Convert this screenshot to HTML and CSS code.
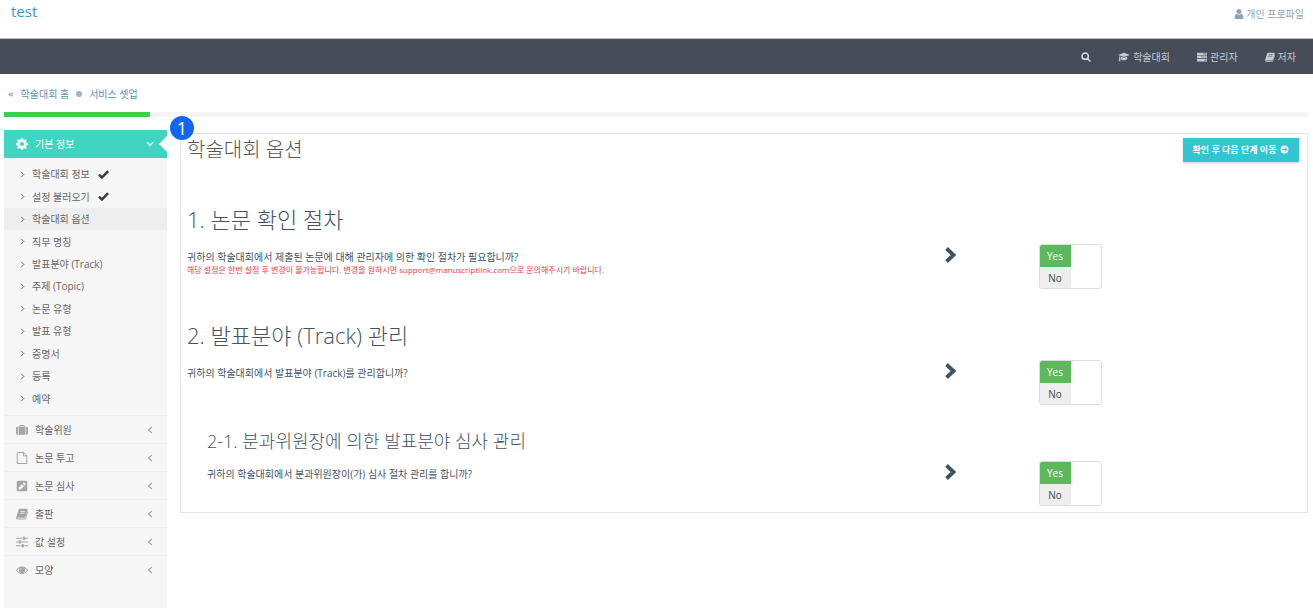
FILE: index.html
```html
<!DOCTYPE html>
<html lang="ko">
<head>
  <meta charset="UTF-8">
  <meta name="viewport" content="width=device-width, initial-scale=1.0">
  <title>학술대회 옵션</title>
  <link rel="stylesheet" href="styles.css">
</head>
<body>
  <!-- icons -->
  <svg width="0" height="0" class="sprite" aria-hidden="true">
    <symbol id="i-user" viewBox="0 0 16 16"><path d="M8 8a4 4 0 1 0 0-8 4 4 0 0 0 0 8zM4.400 7.500C2 8 1 10.500 1 13.500 1 15 2 16 3.500 16h9c1.500 0 2.500-1 2.500-2.500 0-3-1-5.500-3.400-6a5.200 5.200 0 0 1-7.200 0z"/></symbol>
    <symbol id="i-search" viewBox="0 0 16 16"><path fill="none" stroke="currentColor" stroke-width="2.400" stroke-linecap="round" d="M6.700 11.700a5 5 0 1 0 0-10 5 5 0 0 0 0 10zM10.400 10.400l4 4"/></symbol>
    <symbol id="i-cap" viewBox="0 0 20 16"><path d="M10 1L0 4.600l3 1.100c-.6.8-.8 2-.8 3.300a1 1 0 0 0-.2 1.700L1.300 15h3l-.7-4.300a1 1 0 0 0-.2-1.700c0-1.300.3-2.200.9-2.900L10 8.200l10-3.600zM4.900 7.500L4.600 11c0 1.500 2.500 2.600 5.400 2.600s5.400-1.100 5.400-2.600l-.3-3.500L10 9.400z"/></symbol>
    <symbol id="i-tasks" viewBox="0 0 16 16"><path fill-rule="evenodd" d="M0 1h16v4H0zM0 6h16v4H0zM0 11h16v4H0zM10 2.500v1h5v-1zM6 7.500v1h9v-1zM12 12.500v1h3v-1z"/></symbol>
    <symbol id="i-book" viewBox="0 0 16 16"><path fill-rule="evenodd" d="M5.400 1h8.800c1 0 1.500.7 1.200 1.600l-2.900 9.200c-.3.900-.9 1.200-1.800 1.200H2.600c-.8 0-1 .9 0 .9h8.700c.7 0 1-.3 1.200-.9l2.700-8.800c.6.300.9.800.7 1.500l-2.700 8.400c-.3.900-1 1.400-2 1.400H2.300C.8 15.500-.2 14 .3 12.500L3.300 2.600C3.700 1.500 4.400 1 5.400 1zM6.200 4l-.3 1h6l.3-1zM5.500 6.300l-.3 1h6l.3-1z"/></symbol>
    <symbol id="i-cog" viewBox="0 0 16 16"><path fill-rule="evenodd" d="M6.800 0h2.400l.4 2.100 1.300.6L12.700 1.500l1.800 1.800-1.200 1.800.6 1.300 2.100.4v2.400l-2.100.4-.6 1.300 1.200 1.800-1.800 1.800-1.800-1.200-1.300.6L9.200 16H6.800l-.4-2.100-1.300-.6-1.800 1.200-1.800-1.800 1.200-1.800-.6-1.300L0 9.200V6.800l2.100-.4.600-1.300-1.200-1.800 1.800-1.800 1.800 1.200 1.300-.6zM8 5.300a2.700 2.700 0 1 0 0 5.400 2.700 2.700 0 0 0 0-5.400z"/></symbol>
    <symbol id="i-down" viewBox="0 0 16 16"><path fill="none" stroke="currentColor" stroke-width="2" d="M3 5l5 5 5-5"/></symbol>
    <symbol id="i-left" viewBox="0 0 16 16"><path fill="none" stroke="currentColor" stroke-width="2" d="M11 3L6 8l5 5"/></symbol>
    <symbol id="i-right" viewBox="0 0 16 16"><path fill="none" stroke="currentColor" stroke-width="2.200" d="M5 2l6 6-6 6"/></symbol>
    <symbol id="i-chevron" viewBox="0 0 12 16"><path fill="none" stroke="currentColor" stroke-width="3.800" d="M1.500 1.500L8.500 8l-7 6.500"/></symbol>
    <symbol id="i-check" viewBox="0 0 16 16"><path fill="none" stroke="currentColor" stroke-width="3.600" d="M1.500 8.200l4.200 4.200 9-9.200"/></symbol>
    <symbol id="i-case" viewBox="0 0 18 16"><path fill-rule="evenodd" d="M5 3V1.500C5 .8 5.500.5 6 .5h6c.6 0 1 .4 1 1V3h1.200v12H3.800V3zM6.500 2v1h5V2zM2.800 3v12H2a2 2 0 0 1-2-2V5c0-1.100.9-2 2-2zM15.200 3v12h.8a2 2 0 0 0 2-2V5a2 2 0 0 0-2-2z"/></symbol>
    <symbol id="i-file" viewBox="0 0 16 16"><path fill="none" stroke="currentColor" stroke-width="1.300" stroke-linejoin="round" d="M1.700.7h8.600l4 4v10.600H1.700zM10 .7v4.500h4.300"/></symbol>
    <symbol id="i-pencil" viewBox="0 0 16 16"><path fill-rule="evenodd" d="M3 1h10a2 2 0 0 1 2 2v10a2 2 0 0 1-2 2H3a2 2 0 0 1-2-2V3c0-1.100.9-2 2-2zM3.700 12.500h2.600l4.300-4.300L8 5.600 3.700 9.900zM8.800 4.800l2.600 2.600 1.200-1.200c.4-.4.4-.7 0-1.100l-1.500-1.500c-.4-.4-.7-.4-1.100 0z"/></symbol>
    <symbol id="i-sliders" viewBox="0 0 16 16"><path d="M0 2.400h9v1.200H0zM13 2.400h3v1.200h-3zM9.500 1h3v4h-3zM0 7.400h3v1.200H0zM7 7.400h9v1.200H7zM3.500 6h3v4h-3zM0 12.400h7v1.200H0zM11 12.400h5v1.200h-5zM7.500 11h3v4h-3z"/></symbol>
    <symbol id="i-eye" viewBox="0 0 18 16"><path fill-rule="evenodd" d="M0 8.500C2 5 5.300 2.800 9 2.800s7 2.200 9 5.700c-2 3.400-5.300 5.500-9 5.500s-7-2.100-9-5.500zM1.600 8.500c1.700 2.600 4.400 4.300 7.400 4.300s5.700-1.700 7.400-4.300A9.300 9.300 0 0 0 12.600 5a4.600 4.600 0 1 1-7.200 0 9.300 9.300 0 0 0-3.800 3.500zM9 4.500c-1.400 0-2.700 1.200-2.700 2.700h1c0-1 .8-1.700 1.700-1.700z"/></symbol>
    <symbol id="i-go" viewBox="0 0 16 16"><path fill-rule="evenodd" d="M8 1a7 7 0 1 1 0 14A7 7 0 0 1 8 1zM7.600 3.800L9.900 7H3.700v2h6.200l-2.300 3.200h2.200L13 8 9.800 3.800z"/></symbol>
  </svg>

  <header class="top">
    <a class="logo" href="#">test</a>
    <a class="profile" href="#"><svg class="icon"><use href="#i-user"/></svg>개인 프로파일</a>
  </header>

  <nav class="navbar">
    <button class="search-btn" type="button" aria-label="검색"><svg class="icon"><use href="#i-search"/></svg></button>
    <a href="#"><svg class="icon icon-wide"><use href="#i-cap"/></svg>학술대회</a>
    <a href="#"><svg class="icon"><use href="#i-tasks"/></svg>관리자</a>
    <a href="#"><svg class="icon"><use href="#i-book"/></svg>저자</a>
  </nav>

  <div class="breadcrumb">
    <span class="home-dot">«</span>
    <a href="#">학술대회 홈</a>
    <span class="dot"></span>
    <a href="#">서비스 셋업</a>
  </div>

  <div class="progress"><div class="progress-bar"></div></div>

  <div class="page">
    <aside class="sidebar">
      <a class="menu active" href="#"><svg class="icon"><use href="#i-cog"/></svg><span>기본 정보</span><svg class="arrow"><use href="#i-down"/></svg></a>
      <ul class="submenu">
        <li><a href="#"><svg><use href="#i-right"/></svg>학술대회 정보<svg class="check"><use href="#i-check"/></svg></a></li>
        <li><a href="#"><svg><use href="#i-right"/></svg>설정 불러오기<svg class="check"><use href="#i-check"/></svg></a></li>
        <li class="current"><a href="#"><svg><use href="#i-right"/></svg>학술대회 옵션</a></li>
        <li><a href="#"><svg><use href="#i-right"/></svg>직무 명칭</a></li>
        <li><a href="#"><svg><use href="#i-right"/></svg>발표분야 (Track)</a></li>
        <li><a href="#"><svg><use href="#i-right"/></svg>주제 (Topic)</a></li>
        <li><a href="#"><svg><use href="#i-right"/></svg>논문 유형</a></li>
        <li><a href="#"><svg><use href="#i-right"/></svg>발표 유형</a></li>
        <li><a href="#"><svg><use href="#i-right"/></svg>증명서</a></li>
        <li><a href="#"><svg><use href="#i-right"/></svg>등록</a></li>
        <li><a href="#"><svg><use href="#i-right"/></svg>예약</a></li>
      </ul>
      <a class="menu" href="#"><svg class="icon"><use href="#i-case"/></svg><span>학술위원</span><svg class="arrow"><use href="#i-left"/></svg></a>
      <a class="menu" href="#"><svg class="icon"><use href="#i-file"/></svg><span>논문 투고</span><svg class="arrow"><use href="#i-left"/></svg></a>
      <a class="menu" href="#"><svg class="icon"><use href="#i-pencil"/></svg><span>논문 심사</span><svg class="arrow"><use href="#i-left"/></svg></a>
      <a class="menu" href="#"><svg class="icon"><use href="#i-book"/></svg><span>출판</span><svg class="arrow"><use href="#i-left"/></svg></a>
      <a class="menu" href="#"><svg class="icon"><use href="#i-sliders"/></svg><span>값 설정</span><svg class="arrow"><use href="#i-left"/></svg></a>
      <a class="menu" href="#"><svg class="icon"><use href="#i-eye"/></svg><span>모양</span><svg class="arrow"><use href="#i-left"/></svg></a>
    </aside>

    <main class="panel">
      <span class="step-badge">1</span>
      <div class="panel-head">
        <h1>학술대회 옵션</h1>
        <button class="next-btn" type="button">확인 후 다음 단계 이동 <svg><use href="#i-go"/></svg></button>
      </div>

      <section class="option">
        <h2>1. 논문 확인 절차</h2>
        <div class="row">
          <div class="text">
            <p>귀하의 학술대회에서 제출된 논문에 대해 관리자에 의한 확인 절차가 필요합니까?</p>
            <p class="warning">해당 설정은 한번 설정 후 변경이 불가능합니다. 변경을 원하시면 support@manuscriptlink.com으로 문의해주시기 바랍니다.</p>
          </div>
          <svg class="chevron"><use href="#i-chevron"/></svg>
          <div class="switch" role="radiogroup" aria-label="논문 확인 절차">
            <label class="yes"><input type="radio" name="confirm" checked>Yes</label>
            <label class="no"><input type="radio" name="confirm">No</label>
          </div>
        </div>
      </section>

      <section class="option">
        <h2>2. 발표분야 (Track) 관리</h2>
        <div class="row">
          <div class="text">
            <p>귀하의 학술대회에서 발표분야 (Track)를 관리합니까?</p>
          </div>
          <svg class="chevron"><use href="#i-chevron"/></svg>
          <div class="switch" role="radiogroup" aria-label="발표분야 관리">
            <label class="yes"><input type="radio" name="track" checked>Yes</label>
            <label class="no"><input type="radio" name="track">No</label>
          </div>
        </div>
      </section>

      <section class="option sub">
        <h3>2-1. 분과위원장에 의한 발표분야 심사 관리</h3>
        <div class="row">
          <div class="text">
            <p>귀하의 학술대회에서 분과위원장이(가) 심사 절차 관리를 합니까?</p>
          </div>
          <svg class="chevron"><use href="#i-chevron"/></svg>
          <div class="switch" role="radiogroup" aria-label="발표분야 심사 관리">
            <label class="yes"><input type="radio" name="chair" checked>Yes</label>
            <label class="no"><input type="radio" name="chair">No</label>
          </div>
        </div>
      </section>
    </main>
  </div>
</body>
</html>
```
FILE: styles.css
```css
* {
  box-sizing: border-box;
}
body {
  margin: 0;
  min-height: 100vh;
  display: flex;
  flex-direction: column;
  background: #fff;
  color: #3f5367;
  font-family: "Open Sans", "Noto Sans CJK KR", sans-serif;
  font-size: 10px;
  line-height: 16px;
}
a {
  text-decoration: none;
}
svg {
  fill: currentColor;
  flex: none;
}
.sprite {
  position: absolute;
}
.icon {
  width: 10px;
  height: 10px;
}

/* header */
.top {
  display: flex;
  justify-content: space-between;
  height: 39px;
  padding: 0 9px 0 11px;
  border-bottom: 1px solid #b5bac0;
}
.logo {
  color: #3598dc;
  font-size: 15px;
  line-height: 22px;
}
.profile {
  display: flex;
  align-items: center;
  gap: 2px;
  height: 28px;
  color: #8ea3b6;
}
.navbar {
  display: flex;
  justify-content: flex-end;
  align-items: center;
  gap: 27px;
  height: 35px;
  padding: 0 17px;
  background: #464d59;
}
.navbar a {
  display: flex;
  align-items: center;
  gap: 3px;
  color: #c5cad3;
}
.navbar .icon-wide {
  width: 12px;
}
.search-btn {
  display: flex;
  padding: 0;
  border: none;
  background: none;
  color: #d5dae2;
}
.breadcrumb {
  display: flex;
  align-items: center;
  gap: 7px;
  height: 38px;
  padding: 2px 8px 0;
}
.breadcrumb a {
  color: #5c8fc0;
}
.home-dot {
  color: #a0a8b0;
  font-size: 9px;
  font-weight: bold;
}
.dot {
  width: 6px;
  height: 6px;
  border-radius: 50%;
  background: #a7b1bd;
}
.progress {
  height: 5px;
  margin: 0 4px;
  background: #f5f5f5;
}
.progress-bar {
  width: 146px;
  height: 100%;
  background: #3fce52;
}

/* sidebar */
.page {
  display: flex;
  align-items: flex-start;
  flex: 1;
  gap: 13px;
  padding: 13px 5px 0 4px;
}
.sidebar {
  align-self: stretch;
  flex: none;
  width: 163px;
  background: #f6f6f6;
}
.menu {
  display: flex;
  align-items: center;
  height: 28px;
  padding: 0 12px;
  border-top: 1px solid #eee;
  color: #666;
}
.menu span {
  flex: 1;
  padding-left: 7px;
}
.menu .icon {
  width: 12px;
  height: 12px;
  color: #a5a5a5;
}
.arrow {
  width: 10px;
  height: 10px;
  color: #aaa;
}
.menu.active {
  position: relative;
  border-top: none;
  background: #3fd5c0;
  color: #fff;
}
.menu.active .icon,
.menu.active .arrow {
  color: #fff;
}
.menu.active::after {
  content: "";
  position: absolute;
  right: 0;
  top: 6px;
  border: 8px solid transparent;
  border-right-color: #fff;
  border-left: none;
}
.submenu {
  display: grid;
  grid-auto-rows: 1fr;
  height: 257px;
  margin: 0;
  padding: 5px 0;
  list-style: none;
}
.submenu a {
  display: flex;
  align-items: center;
  height: 100%;
  padding-left: 15px;
  color: #666;
}
.submenu svg {
  width: 7px;
  height: 7px;
  margin-right: 6px;
}
.submenu .check {
  width: 11px;
  height: 11px;
  margin: 0 0 0 8px;
  color: #3a3a3a;
}
.submenu .current {
  background: #eee;
}

/* content */
.panel {
  position: relative;
  flex: 1;
  margin-top: 3px;
  padding: 2px 6px 6px;
  border: 1px solid #e5e5e5;
}
.step-badge {
  position: absolute;
  left: -11px;
  top: -18px;
  width: 24px;
  height: 24px;
  border-radius: 50%;
  background: #1266f1;
  color: #fff;
  font-size: 18px;
  line-height: 24px;
  text-align: center;
}
h1, h2, h3, p {
  margin: 0;
}
h1, h2, h3 {
  font-weight: 300;
}
.panel-head {
  display: flex;
  justify-content: space-between;
  align-items: center;
  height: 28px;
  margin-bottom: 40px;
  padding-right: 2px;
}
h1 {
  color: #555;
  font-size: 20px;
  line-height: 28px;
}
.next-btn {
  display: flex;
  align-items: center;
  justify-content: center;
  gap: 4px;
  width: 116px;
  height: 24px;
  padding: 0 0 2px;
  border: none;
  background: #32c5d2;
  box-shadow: 0 1px 2px rgba(0,0,0,0.2);
  color: #fff;
  font-family: inherit;
  font-size: 9px;
  font-weight: bold;
}
.next-btn svg {
  width: 9px;
  height: 9px;
}
.option {
  margin-bottom: 31px;
}
.option h2 {
  margin-bottom: 10px;
  font-size: 22px;
  line-height: 30px;
}
.option h3 {
  margin-bottom: 8px;
  font-size: 18px;
  line-height: 24px;
}
.option.sub {
  margin: -7px 0 0;
}
.sub h3,
.sub .text {
  padding-left: 20px;
}
.row {
  display: grid;
  grid-template-columns: 8fr 1fr 3fr;
}
.text p {
  line-height: 16px;
}
.text {
  padding-top: 5px;
}
.text .warning {
  color: #e7403f;
  font-size: 8px;
  line-height: 10px;
}
.chevron {
  width: 12px;
  height: 16px;
  margin: 3px 0 0 15px;
}
.switch {
  display: flex;
  flex-direction: column;
  width: 63px;
  height: 45px;
  margin-left: 16px;
  border: 1px solid #ddd;
  border-radius: 3px;
  overflow: hidden;
}
.switch label {
  position: relative;
  flex: 1;
  width: 31px;
  line-height: 22px;
  text-align: center;
}
.switch input {
  position: absolute;
  inset: 0;
  margin: 0;
  opacity: 0;
}
.switch .yes {
  background: #5cb85c;
  color: #fff;
}
.switch .no {
  background: #eee;
  color: #444;
}
```
